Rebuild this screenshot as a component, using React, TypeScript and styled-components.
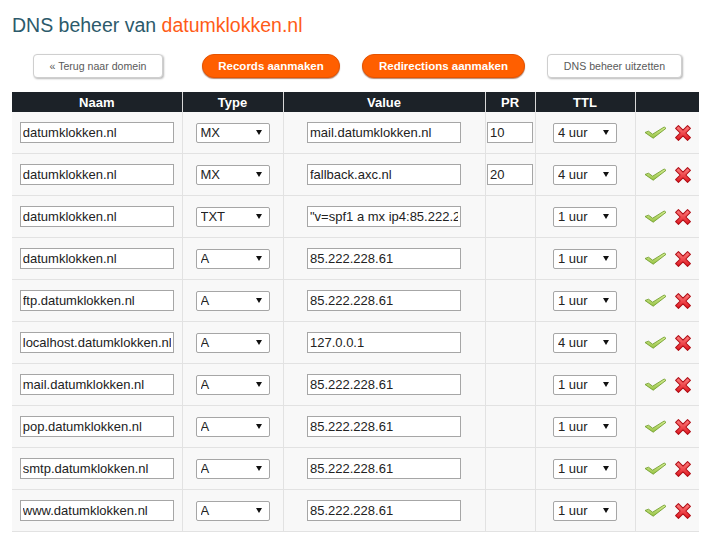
import React from "react";
import styled, { createGlobalStyle } from "styled-components";

const GlobalStyle = createGlobalStyle`
  html, body { margin: 0; padding: 0; background: #ffffff; }
  body { font-family: "Liberation Sans", Arial, sans-serif; color: #222; }
`;

const Page = styled.div`
  padding: 13px 14px 0 12px;
  display: flex;
  flex-direction: column;
`;

const Title = styled.h1`
  margin: 0;
  font-size: 19.5px;
  line-height: 24px;
  font-weight: normal;
  color: #2c5a6b;
`;

const Domain = styled.span`
  color: #ff5b17;
`;

const ButtonBar = styled.div`
  display: flex;
  align-items: center;
  margin: 16px 0 0 21px;
  height: 25px;
`;

const Button = styled.button<{ $primary?: boolean; $w: number; $ml?: number }>`
  box-sizing: border-box;
  width: ${(p) => p.$w}px;
  height: 24px;
  margin-left: ${(p) => p.$ml ?? 0}px;
  padding: 0;
  font-family: "Liberation Sans", Arial, sans-serif;
  cursor: pointer;
  ${(p) =>
    p.$primary
      ? `
    background: #ff5f00;
    border: 1px solid #e65300;
    border-radius: 12px;
    color: #ffffff;
    font-weight: bold;
    font-size: 11.5px;
    box-shadow: 0 1px 1px rgba(120, 40, 0, 0.55);
  `
      : `
    background: #ffffff;
    border: 1px solid #cfcfcf;
    border-radius: 4px;
    color: #5a5a5a;
    font-size: 10.6px;
    box-shadow: 1px 1px 2px rgba(0, 0, 0, 0.28);
  `}
`;

const Table = styled.table`
  margin-top: 14px;
  width: 687px;
  border-collapse: collapse;
  table-layout: fixed;
`;

const HeadCell = styled.th`
  height: 20px;
  padding: 0;
  background: #1c2228;
  color: #ffffff;
  font-size: 13px;
  font-weight: bold;
  text-align: center;
  border-left: 1px solid #d8d8d8;
  &:first-child { border-left: none; }
`;

const Row = styled.tr`
  background: #f8f8f8;
  border-bottom: 1px solid #e2e2e2;
`;

const Cell = styled.td`
  height: 41px;
  padding: 0;
  text-align: center;
  vertical-align: middle;
  border-left: 1px solid #e2e2e2;
  &:first-child { border-left: none; }
`;

const TextInput = styled.input<{ $w: number }>`
  box-sizing: border-box;
  width: ${(p) => p.$w}px;
  height: 21px;
  margin: 0;
  padding: 0 2px;
  border: 1px solid #a6a6a6;
  background: #ffffff;
  font-family: "Liberation Sans", Arial, sans-serif;
  font-size: 13px;
  color: #222;
  vertical-align: middle;
  outline: none;
`;

const SelectWrap = styled.span<{ $w: number }>`
  position: relative;
  display: inline-block;
  width: ${(p) => p.$w}px;
  height: 20px;
  vertical-align: middle;
`;

const Select = styled.select`
  appearance: none;
  -webkit-appearance: none;
  box-sizing: border-box;
  width: 100%;
  height: 20px;
  margin: 0;
  padding: 0 0 0 4px;
  border: 1px solid #a6a6a6;
  border-radius: 2px;
  background: #ffffff;
  font-family: "Liberation Sans", Arial, sans-serif;
  font-size: 13px;
  color: #222;
  outline: none;
`;

const Arrow = styled.svg`
  position: absolute;
  right: 8px;
  top: 7px;
  pointer-events: none;
`;

const Actions = styled.div`
  display: flex;
  align-items: center;
  padding-left: 8px;
  gap: 7px;
`;

const Check = () => (
  <svg width="23" height="13" viewBox="0 0 23 13">
    <defs>
      <linearGradient id="chk" x1="0" y1="0" x2="0" y2="1">
        <stop offset="0" stopColor="#d8ee96" />
        <stop offset="1" stopColor="#96c244" />
      </linearGradient>
    </defs>
    <path
      d="M1 6.5 L4.5 5.2 L8.6 8.2 L20.2 1 L22 2.3 L9.2 12.2 Z"
      fill="url(#chk)"
      stroke="#74a030"
      strokeWidth="0.9"
      strokeLinejoin="round"
    />
  </svg>
);

const Cross = () => (
  <svg width="18" height="18" viewBox="0 0 17 17">
    <defs>
      <linearGradient id="crs" x1="0" y1="0" x2="0" y2="1">
        <stop offset="0" stopColor="#ff8080" />
        <stop offset="1" stopColor="#e0161e" />
      </linearGradient>
    </defs>
    <path
      d="M1.5 4.2 L4.2 1.5 L8.5 5.8 L12.8 1.5 L15.5 4.2 L11.2 8.5 L15.5 12.8 L12.8 15.5 L8.5 11.2 L4.2 15.5 L1.5 12.8 L5.8 8.5 Z"
      fill="url(#crs)"
      stroke="#b01018"
      strokeWidth="1"
      strokeLinejoin="round"
    />
  </svg>
);

type Rec = { name: string; type: string; value: string; pr?: string; ttl: string };

const records: Rec[] = [
  { name: "datumklokken.nl", type: "MX", value: "mail.datumklokken.nl", pr: "10", ttl: "4 uur" },
  { name: "datumklokken.nl", type: "MX", value: "fallback.axc.nl", pr: "20", ttl: "4 uur" },
  { name: "datumklokken.nl", type: "TXT", value: "\"v=spf1 a mx ip4:85.222.228.61 ~all\"", ttl: "1 uur" },
  { name: "datumklokken.nl", type: "A", value: "85.222.228.61", ttl: "1 uur" },
  { name: "ftp.datumklokken.nl", type: "A", value: "85.222.228.61", ttl: "1 uur" },
  { name: "localhost.datumklokken.nl", type: "A", value: "127.0.0.1", ttl: "4 uur" },
  { name: "mail.datumklokken.nl", type: "A", value: "85.222.228.61", ttl: "1 uur" },
  { name: "pop.datumklokken.nl", type: "A", value: "85.222.228.61", ttl: "1 uur" },
  { name: "smtp.datumklokken.nl", type: "A", value: "85.222.228.61", ttl: "1 uur" },
  { name: "www.datumklokken.nl", type: "A", value: "85.222.228.61", ttl: "1 uur" },
];

const TYPES = ["A", "AAAA", "CNAME", "MX", "TXT", "SRV", "NS"];
const TTLS = ["1 uur", "4 uur", "12 uur", "1 dag"];

const Dropdown = ({ w, value, options }: { w: number; value: string; options: string[] }) => (
  <SelectWrap $w={w}>
    <Select defaultValue={value}>
      {options.map((o) => (
        <option key={o} value={o}>
          {o}
        </option>
      ))}
    </Select>
    <Arrow width="6" height="5" viewBox="0 0 6 5">
      <path d="M0 0 H6 L3 5 Z" fill="#111" />
    </Arrow>
  </SelectWrap>
);

export default function App() {
  return (
    <>
      <GlobalStyle />
      <Page>
        <Title>
          DNS beheer van <Domain>datumklokken.nl</Domain>
        </Title>
        <ButtonBar>
          <Button $w={130}>« Terug naar domein</Button>
          <Button $primary $w={138} $ml={39}>
            Records aanmaken
          </Button>
          <Button $primary $w={163} $ml={22}>
            Redirections aanmaken
          </Button>
          <Button $w={135} $ml={22}>
            DNS beheer uitzetten
          </Button>
        </ButtonBar>
        <Table>
          <colgroup>
            <col style={{ width: 170 }} />
            <col style={{ width: 101 }} />
            <col style={{ width: 202 }} />
            <col style={{ width: 50 }} />
            <col style={{ width: 100 }} />
            <col style={{ width: 64 }} />
          </colgroup>
          <thead>
            <tr>
              <HeadCell>Naam</HeadCell>
              <HeadCell>Type</HeadCell>
              <HeadCell>Value</HeadCell>
              <HeadCell>PR</HeadCell>
              <HeadCell>TTL</HeadCell>
              <HeadCell />
            </tr>
          </thead>
          <tbody>
            {records.map((r, i) => (
              <Row key={i}>
                <Cell>
                  <TextInput $w={154} defaultValue={r.name} />
                </Cell>
                <Cell>
                  <Dropdown w={74} value={r.type} options={TYPES} />
                </Cell>
                <Cell>
                  <TextInput $w={154} defaultValue={r.value} />
                </Cell>
                <Cell>{r.pr && <TextInput $w={46} defaultValue={r.pr} />}</Cell>
                <Cell>
                  <Dropdown w={64} value={r.ttl} options={TTLS} />
                </Cell>
                <Cell>
                  <Actions>
                    <Check />
                    <Cross />
                  </Actions>
                </Cell>
              </Row>
            ))}
          </tbody>
        </Table>
      </Page>
    </>
  );
}
